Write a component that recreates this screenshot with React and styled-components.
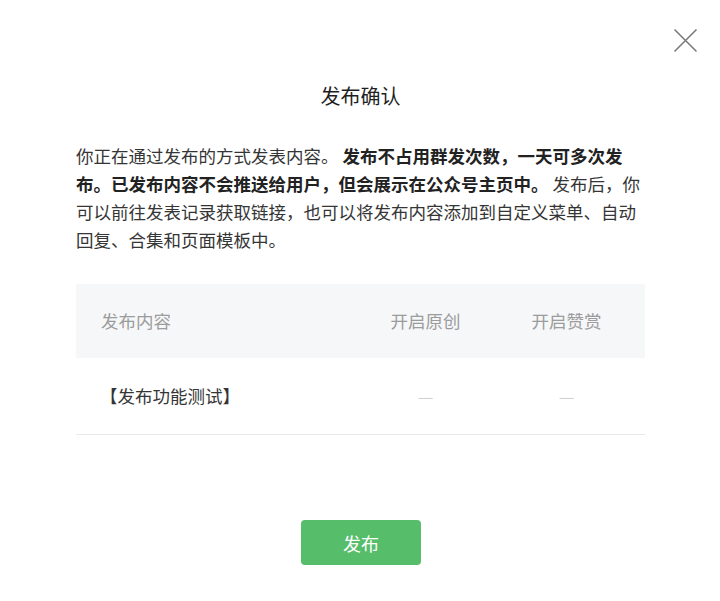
import React from "react";
import styled, { createGlobalStyle } from "styled-components";

const Global = createGlobalStyle`
  html, body { margin: 0; padding: 0; background: #fff; }
  body { font-family: "Noto Sans CJK SC", "Noto Sans", sans-serif; color: #353535; }
  * { box-sizing: border-box; }
`;

const Dialog = styled.div`
  position: relative;
  width: 720px;
  height: 601px;
  padding: 82px 75px 0 76px;
  display: flex;
  flex-direction: column;
  background: #fff;
`;

const CloseButton = styled.button`
  position: absolute;
  top: 28px;
  left: 673px;
  width: 25px;
  height: 25px;
  padding: 0;
  border: none;
  background: transparent;
  cursor: pointer;
  display: flex;
`;

const Title = styled.h2`
  margin: 0;
  font-size: 20px;
  font-weight: 400;
  line-height: 28px;
  text-align: center;
  color: #1f1f1f;
`;

const Desc = styled.p`
  margin: 32px 0 0;
  font-size: 17.5px;
  line-height: 28px;
  color: #353535;
`;

const Strong = styled.strong`
  font-weight: 700;
  color: #222;
`;

const Table = styled.div`
  margin-top: 30px;
  display: flex;
  flex-direction: column;
`;

const Row = styled.div`
  display: grid;
  grid-template-columns: 1fr 141px 141px;
  padding-right: 8px;
  align-items: center;
  height: ${(p) => (p.$head ? "74px" : "77px")};
  background: ${(p) => (p.$head ? "#f6f7f9" : "#fff")};
  border-bottom: ${(p) => (p.$head ? "none" : "1px solid #e9e9e9")};
`;

const Cell = styled.div`
  font-size: 17.5px;
  line-height: 24px;
  color: ${(p) => (p.$muted ? "#9c9c9c" : p.$dash ? "#cfcfcf" : "#353535")};
  text-align: ${(p) => (p.$center ? "center" : "left")};
  padding-left: ${(p) => (p.$center ? "0" : p.$indent)};
`;

const Footer = styled.div`
  margin-top: 85px;
  display: flex;
  justify-content: center;
  padding-left: 1px;
`;

const PrimaryButton = styled.button`
  width: 120px;
  height: 45px;
  border: none;
  border-radius: 4px;
  background: #56bd6a;
  color: #fff;
  font-family: "Noto Sans CJK SC", sans-serif;
  font-size: 18px;
  cursor: pointer;
`;

export default function App() {
  return (
    <>
      <Global />
      <Dialog>
        <CloseButton aria-label="关闭">
          <svg width="25" height="25" viewBox="0 0 25 25">
            <path d="M1.5 1.5 L23.5 23.5 M23.5 1.5 L1.5 23.5" stroke="#7b7b7b" strokeWidth="1.6" fill="none" />
          </svg>
        </CloseButton>
        <Title>发布确认</Title>
        <Desc>
          你正在通过发布的方式发表内容。{" "}
          <Strong>发布不占用群发次数，一天可多次发布。已发布内容不会推送给用户，但会展示在公众号主页中。</Strong>{" "}
          发布后，你可以前往发表记录获取链接，也可以将发布内容添加到自定义菜单、自动回复、合集和页面模板中。
        </Desc>
        <Table>
          <Row $head>
            <Cell $muted $indent="25px">发布内容</Cell>
            <Cell $muted $center>开启原创</Cell>
            <Cell $muted $center>开启赞赏</Cell>
          </Row>
          <Row>
            <Cell $indent="24px">【发布功能测试】</Cell>
            <Cell $dash $center>—</Cell>
            <Cell $dash $center>—</Cell>
          </Row>
        </Table>
        <Footer>
          <PrimaryButton>发布</PrimaryButton>
        </Footer>
      </Dialog>
    </>
  );
}
